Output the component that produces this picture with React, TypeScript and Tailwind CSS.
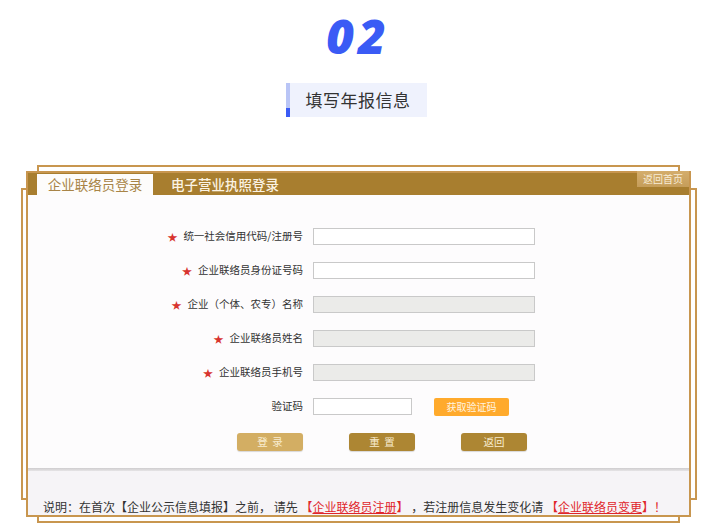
import React from "react";

const cjk = "font-['Noto_Sans_CJK_SC','Noto_Sans',sans-serif]";

function Star() {
  return <span className="text-[#d8342f] text-[10px] mr-[6px] leading-none">★</span>;
}

function Row({ label, star = true, gray = false }: { label: string; star?: boolean; gray?: boolean }) {
  return (
    <div className="flex items-center h-[17px]">
      <div className="w-[275px] flex justify-end items-center text-[10.5px] text-[#333] leading-none">
        {star && <Star />}
        <span>{label}</span>
      </div>
      <div
        className={
          "ml-[10px] w-[222px] h-[17px] border border-[#c9c9c9] " +
          (gray ? "bg-[#ebebe9]" : "bg-white")
        }
      />
    </div>
  );
}

export default function App() {
  return (
    <div className={"w-[712px] h-[529px] bg-white overflow-hidden " + cjk}>
      <div className="flex flex-col items-center pt-[8px]">
        <div className="font-['Open_Sans',sans-serif] italic font-extrabold text-[48px] leading-[56px] text-[#3a5bf5] tracking-[4px] pl-[4px]">
          02
        </div>
        <div className="mt-[19px] flex h-[34px] w-[141px] bg-[#eff2fd]">
          <div className="w-[4px] flex flex-col">
            <div className="h-[25px] bg-[#b9c5f6]" />
            <div className="flex-1 bg-[#3a5bf5]" />
          </div>
          <div className="flex-1 flex items-center justify-center text-[17px] text-[#333] tracking-[0.5px]">
            填写年报信息
          </div>
        </div>
      </div>

      <div className="relative ml-[21px] mt-[48px] w-[675px] h-[357px] pl-[5px] pt-[6px]">
        <div className="absolute left-[16px] top-0 w-[643px] h-[358px] border-2 border-[#c8964f]" />
        <div className="absolute left-0 top-[23px] w-[676px] h-[312px] border-2 border-[#c8964f]" />
        <div className="relative w-[665px] h-[346px] border-2 border-[#c8964f] bg-[#fdfcfd] flex flex-col">
          {/* header band */}
          <div className="h-[22px] bg-[#a87e2f] flex items-end pl-[9px] relative">
            <div className="w-[116px] h-[21px] bg-[#fdfcfb] flex items-center justify-center text-[13.5px] text-[#a88447] leading-none">
              企业联络员登录
            </div>
            <div className="ml-[18px] h-[21px] flex items-center text-[13.5px] text-[#fbf3e3] font-medium leading-none">
              电子营业执照登录
            </div>
            <div className="absolute right-0 top-[-2px] w-[52px] h-[16px] bg-gradient-to-b from-[#d4ad6c] to-[#c59d5a] flex items-center justify-center text-[10px] text-[#f7ecd6] leading-none">
              返回首页
            </div>
          </div>

          {/* body */}
          <div className="h-[273px] pt-[33px] flex flex-col">
            <div className="flex flex-col gap-[17px]">
              <Row label="统一社会信用代码/注册号" />
              <Row label="企业联络员身份证号码" />
              <Row label="企业（个体、农专）名称" gray />
              <Row label="企业联络员姓名" gray />
              <Row label="企业联络员手机号" gray />
              <div className="flex items-center h-[17px]">
                <div className="w-[275px] text-right text-[10.5px] text-[#333] leading-none">验证码</div>
                <div className="ml-[10px] w-[99px] h-[17px] border border-[#c9c9c9] bg-white" />
                <div className="ml-[22px] w-[75px] h-[18px] rounded-[2px] bg-[#ffaa2c] flex items-center justify-center text-[10px] text-[#fff4e0] leading-none">
                  获取验证码
                </div>
              </div>
            </div>
            <div className="mt-[18px] pl-[209px] flex gap-[46px]">
              <div className="w-[66px] h-[18px] rounded-[3px] bg-[#d3ae63] flex items-center justify-center text-[10.5px] text-[#f8ecd0] leading-none shadow-[0_1px_1px_rgba(0,0,0,0.15)]">
                登&nbsp;&nbsp;录
              </div>
              <div className="w-[66px] h-[18px] rounded-[3px] bg-[#ad8633] flex items-center justify-center text-[10.5px] text-[#f8ecd0] leading-none shadow-[0_1px_1px_rgba(0,0,0,0.15)]">
                重&nbsp;&nbsp;置
              </div>
              <div className="w-[66px] h-[18px] rounded-[3px] bg-[#ad8633] flex items-center justify-center text-[10.5px] text-[#f8ecd0] leading-none shadow-[0_1px_1px_rgba(0,0,0,0.15)]">
                返回
              </div>
            </div>
          </div>

          {/* separator */}
          <div className="h-[3px] bg-gradient-to-b from-[#cfcdcf] to-[#e6e4e6]" />

          {/* footer */}
          <div className="flex-1 bg-[#f6f4f7] flex items-end pl-[15px] pb-[1px]">
            <div className="text-[12px] text-[#333] leading-[14px] whitespace-nowrap">
              说明：在首次【企业公示信息填报】之前， 请先{" "}
              <span className="text-[#e0262b]">
                【<span className="underline">企业联络员注册</span>】
              </span>{" "}
              ，若注册信息发生变化请{" "}
              <span className="text-[#e0262b]">
                【<span className="underline">企业联络员变更</span>】！
              </span>
            </div>
          </div>
        </div>
      </div>
    </div>
  );
}
